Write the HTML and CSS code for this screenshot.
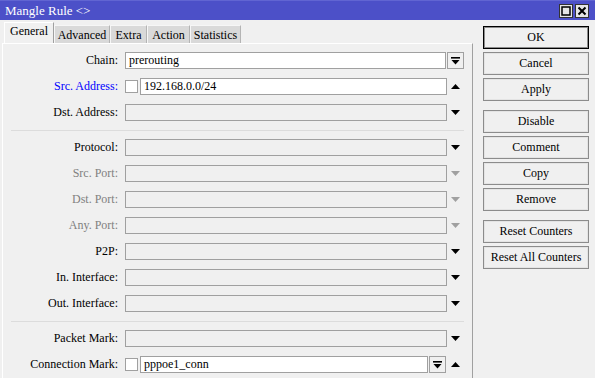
FILE: index.html
```
<!DOCTYPE html>
<html>
<head>
<meta charset="utf-8">
<link rel="stylesheet" href="styles.css">
</head>
<body>
<div class="titlebar">
  <span class="title">Mangle Rule &lt;&gt;</span>
  <span class="winbtn"><svg width="10" height="10" viewBox="0 0 10 10"><rect x="1" y="1" width="8" height="8" fill="none" stroke="#000" stroke-width="1.5"/></svg></span>
  <span class="winbtn"><svg width="10" height="10" viewBox="0 0 10 10"><path d="M1.5 1.5L8.5 8.5M8.5 1.5L1.5 8.5" stroke="#000" stroke-width="2"/></svg></span>
</div>
<div class="main">
  <div class="left">
    <div class="tabs">
      <div class="tab active w-general">General</div>
      <div class="tab w-adv">Advanced</div>
      <div class="tab w-extra">Extra</div>
      <div class="tab w-action">Action</div>
      <div class="tab w-stats">Statistics</div>
    </div>
    <div class="panel">
      <div class="row">
        <div class="label">Chain:</div>
        <div class="field">
          <div class="box white">prerouting</div>
          <div class="ddbtn"><svg width="9" height="8" viewBox="0 0 9 8"><rect x="0" y="0" width="9" height="1.6"/><path d="M0.5 3H8.5L4.5 7.5Z"/></svg></div>
        </div>
      </div>
      <div class="row">
        <div class="label blue">Src. Address:</div>
        <div class="field">
          <div class="check"></div>
          <div class="box white">192.168.0.0/24</div>
          <div class="arrow"><svg width="9" height="5" viewBox="0 0 9 5"><path d="M0 5H9L4.5 0Z"/></svg></div>
        </div>
      </div>
      <div class="row">
        <div class="label">Dst. Address:</div>
        <div class="field">
          <div class="box"></div>
          <div class="arrow"><svg width="9" height="5" viewBox="0 0 9 5"><path d="M0 0H9L4.5 5Z"/></svg></div>
        </div>
      </div>
      <div class="sep"></div>
      <div class="row">
        <div class="label">Protocol:</div>
        <div class="field">
          <div class="box"></div>
          <div class="arrow"><svg width="9" height="5" viewBox="0 0 9 5"><path d="M0 0H9L4.5 5Z"/></svg></div>
        </div>
      </div>
      <div class="row">
        <div class="label grey">Src. Port:</div>
        <div class="field">
          <div class="box"></div>
          <div class="arrow dim"><svg width="9" height="5" viewBox="0 0 9 5"><path d="M0 0H9L4.5 5Z"/></svg></div>
        </div>
      </div>
      <div class="row">
        <div class="label grey">Dst. Port:</div>
        <div class="field">
          <div class="box"></div>
          <div class="arrow dim"><svg width="9" height="5" viewBox="0 0 9 5"><path d="M0 0H9L4.5 5Z"/></svg></div>
        </div>
      </div>
      <div class="row">
        <div class="label grey">Any. Port:</div>
        <div class="field">
          <div class="box"></div>
          <div class="arrow dim"><svg width="9" height="5" viewBox="0 0 9 5"><path d="M0 0H9L4.5 5Z"/></svg></div>
        </div>
      </div>
      <div class="row">
        <div class="label">P2P:</div>
        <div class="field">
          <div class="box"></div>
          <div class="arrow"><svg width="9" height="5" viewBox="0 0 9 5"><path d="M0 0H9L4.5 5Z"/></svg></div>
        </div>
      </div>
      <div class="row">
        <div class="label">In. Interface:</div>
        <div class="field">
          <div class="box"></div>
          <div class="arrow"><svg width="9" height="5" viewBox="0 0 9 5"><path d="M0 0H9L4.5 5Z"/></svg></div>
        </div>
      </div>
      <div class="row">
        <div class="label">Out. Interface:</div>
        <div class="field">
          <div class="box"></div>
          <div class="arrow"><svg width="9" height="5" viewBox="0 0 9 5"><path d="M0 0H9L4.5 5Z"/></svg></div>
        </div>
      </div>
      <div class="sep sep2"></div>
      <div class="row">
        <div class="label">Packet Mark:</div>
        <div class="field">
          <div class="box"></div>
          <div class="arrow"><svg width="9" height="5" viewBox="0 0 9 5"><path d="M0 0H9L4.5 5Z"/></svg></div>
        </div>
      </div>
      <div class="row">
        <div class="label">Connection Mark:</div>
        <div class="field">
          <div class="check"></div>
          <div class="box white">pppoe1_conn</div>
          <div class="ddbtn inline"><svg width="9" height="8" viewBox="0 0 9 8"><rect x="0" y="0" width="9" height="1.6"/><path d="M0.5 3H8.5L4.5 7.5Z"/></svg></div>
          <div class="arrow"><svg width="9" height="5" viewBox="0 0 9 5"><path d="M0 5H9L4.5 0Z"/></svg></div>
        </div>
      </div>
    </div>
  </div>
  <div class="buttons">
    <div class="btn default">OK</div>
    <div class="btn">Cancel</div>
    <div class="btn">Apply</div>
    <div class="btn group">Disable</div>
    <div class="btn">Comment</div>
    <div class="btn">Copy</div>
    <div class="btn">Remove</div>
    <div class="btn group">Reset Counters</div>
    <div class="btn">Reset All Counters</div>
  </div>
</div>
</body>
</html>
```
FILE: styles.css
```
* { box-sizing: border-box; }
html, body { margin: 0; }
body {
  background: #f0f0f0;
  font: 12px "Liberation Serif", serif;
  color: #000;
  width: 595px;
  height: 378px;
  overflow: hidden;
}
.titlebar {
  height: 20px;
  background: #4c50c8;
  border-top: 1px solid #6165d2;
  display: flex;
  align-items: center;
  padding: 0 6px 0 5px;
  color: #fff;
  font-size: 13px;
}
.title { flex: 1; }
.winbtn {
  width: 14px;
  height: 14px;
  background: #e6e6e6;
  border: 1px solid #333;
  margin-left: 2px;
  display: flex;
  align-items: center;
  justify-content: center;
}
.main { display: flex; }
.left { width: 471px; margin-left: 2px; }
.tabs {
  display: flex;
  height: 23px;
  align-items: flex-end;
  padding-left: 2px;
}
.tab {
  height: 18px;
  background: #d9d9d9;
  border: 1px solid #f6f6f6;
  border-right-color: #b4b4b4;
  border-bottom: none;
  display: flex;
  align-items: center;
  justify-content: center;
  padding-top: 1px;
}
.tab.active {
  height: 21px;
  background: #f0f0f0;
  border-color: #fff;
  border-right-color: #a0a0a0;
  padding-top: 0;
  padding-bottom: 3px;
}
.w-general { width: 50px; }
.w-adv { width: 56px; }
.w-extra { width: 37px; }
.w-action { width: 43px; }
.w-stats { width: 51px; }
.panel {
  border-top: 1px solid #fff;
  border-left: 1px solid #fff;
  border-right: 1px solid #a0a0a0;
  height: 335px;
  padding: 8px 8px 0 0;
}
.row {
  display: flex;
  height: 17px;
  margin-bottom: 9px;
  align-items: center;
}
.label {
  width: 115px;
  margin-right: 7px;
  text-align: right;
  white-space: nowrap;
}
.label.blue { color: #0000ff; }
.label.grey { color: #808080; }
.field {
  flex: 1;
  display: flex;
  align-items: center;
  height: 17px;
}
.box {
  flex: 1;
  height: 17px;
  border: 1px solid #a0a0a0;
  background: #f0f0f0;
  padding: 0 0 0 3px;
  line-height: 15px;
  white-space: nowrap;
  overflow: hidden;
}
.box.white { background: #fff; }
.check {
  width: 13px;
  height: 13px;
  border: 1px solid #a0a0a0;
  background: #fff;
  margin-right: 2px;
}
.ddbtn {
  width: 17px;
  height: 17px;
  border: 1px solid #a0a0a0;
  background: #f0f0f0;
  display: flex;
  align-items: center;
  justify-content: center;
  margin-left: 1px;
}
.ddbtn.inline { margin-right: 1px; }
.arrow {
  width: 17px;
  height: 17px;
  display: flex;
  align-items: center;
  justify-content: center;
}
.arrow svg { fill: #000; }
.arrow.dim svg { fill: #a0a0a0; }
.sep {
  height: 1px;
  background: #dcdcdc;
  margin: 0 0 8px 8px;
}
.sep2 { margin-top: 1px; }
.buttons {
  margin-left: 10px;
  padding-top: 6px;
  width: 106px;
  display: flex;
  flex-direction: column;
  gap: 3px;
}
.btn {
  height: 23px;
  border: 1px solid #8c8c8c;
  box-shadow: inset 0 0 0 1px #e4e4e4;
  background: #f0f0f0;
  display: flex;
  align-items: center;
  justify-content: center;
  white-space: nowrap;
}
.btn.default {
  border-color: #000;
  box-shadow: inset 0 0 0 1px #8c8c8c;
}
.btn.group { margin-top: 6px; }
```
